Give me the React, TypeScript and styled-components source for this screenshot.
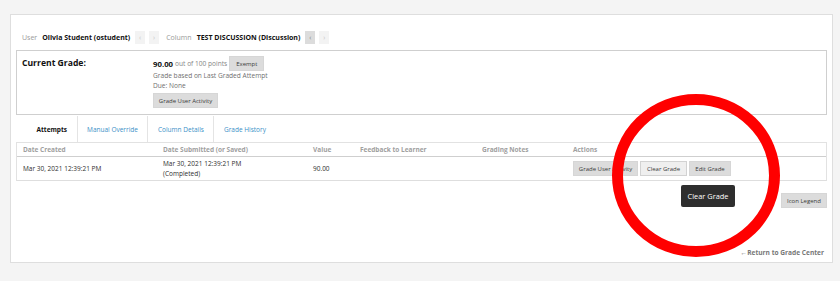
import React from "react";
import styled, { createGlobalStyle } from "styled-components";

const Global = createGlobalStyle`
  html, body { margin: 0; padding: 0; background: #f4f4f4; }
  body { font-family: "Open Sans", "Liberation Sans", sans-serif; color: #333; }
  * { box-sizing: border-box; }
`;

const Page = styled.div`
  position: relative;
  width: 840px;
  height: 281px;
  padding: 14px 7px 19px 10px;
`;

const Panel = styled.div`
  height: 249px;
  background: #fff;
  border: 1px solid #dedede;
  padding: 16px 5px 0 5px;
  display: flex;
  flex-direction: column;
`;

const Context = styled.div`
  display: flex;
  align-items: center;
  height: 12px;
  padding-left: 6px;
  font-size: 7px;
  margin-bottom: 7px;
`;

const Label = styled.span<{ $first?: boolean }>`
  color: #9a9a9a;
  margin-right: 5px;
  margin-left: ${(p) => (p.$first ? "0" : "7px")};
`;

const Strong = styled.span`
  color: #111;
  font-weight: 700;
  margin-right: 1px;
`;

const NavBtn = styled.span<{ $dark?: boolean }>`
  display: inline-flex;
  align-items: center;
  justify-content: center;
  width: 10px;
  height: 13px;
  margin-left: 4px;
  background: ${(p) => (p.$dark ? "#dcdcdc" : "#f3f3f3")};
  color: ${(p) => (p.$dark ? "#888" : "#c8c8c8")};
  font-size: 7px;
`;

const GradeBox = styled.div`
  display: flex;
  border: 1px solid #cfcfcf;
  height: 65px;
  padding: 5px 0 0 5px;
`;

const GradeTitle = styled.div`
  width: 131px;
  font-size: 8.6px;
  font-weight: 700;
  color: #111;
  line-height: 14px;
`;

const GradeInfo = styled.div`
  display: flex;
  flex-direction: column;
  align-items: flex-start;
  font-size: 6.6px;
  color: #6f6f6f;
`;

const ScoreLine = styled.div`
  display: flex;
  align-items: center;
  height: 15px;
`;

const Score = styled.span`
  font-size: 7.8px;
  font-weight: 700;
  color: #111;
  margin-right: 2px;
`;

const Muted = styled.span`
  color: #858585;
  margin-right: 2px;
`;

const Note = styled.div`
  line-height: 10px;
`;

const Button = styled.span<{ $hover?: boolean; $w?: number; $gap?: number }>`
  display: inline-flex;
  align-items: center;
  justify-content: center;
  height: 15px;
  width: ${(p) => (p.$w ? `${p.$w}px` : "auto")};
  margin-top: ${(p) => p.$gap ?? 0}px;
  background: ${(p) => (p.$hover ? "#efefef" : "#dcdcdc")};
  border: 1px solid ${(p) => (p.$hover ? "#d2d2d2" : "#d6d6d6")};
  color: #3a3a3a;
  font-size: 6px;
  white-space: nowrap;
`;

const Tabs = styled.div`
  display: flex;
  height: 26px;
  margin-top: 1px;
  padding-left: 11px;
`;

const Tab = styled.div<{ $active?: boolean }>`
  display: flex;
  align-items: center;
  padding: 0 9.5px;
  font-size: 6.5px;
  font-weight: ${(p) => (p.$active ? 700 : 400)};
  color: ${(p) => (p.$active ? "#111" : "#3b8fc7")};
  & + & { border-left: 1px solid #e4e4e4; }
`;

const Table = styled.div`
  display: grid;
  grid-template-columns: 140px 150px 47px 122px 91px 1fr;
  border: 1px solid #e2e2e2;
  border-bottom: 1px solid #dedede;
`;

const Th = styled.div`
  height: 14px;
  display: flex;
  align-items: center;
  padding-left: 6px;
  font-size: 6.5px;
  font-weight: 700;
  color: #a0a0a0;
  border-bottom: 1px solid #cfcfcf;
`;

const Td = styled.div`
  height: 23px;
  display: flex;
  flex-direction: column;
  justify-content: center;
  padding-left: 6px;
  font-size: 6.5px;
  color: #2e2e2e;
  line-height: 10px;
`;

const Actions = styled.div`
  display: flex;
  gap: 2px;
  align-items: center;
  height: 23px;
  padding-left: 6px;
`;

const LegendRow = styled.div`
  display: flex;
  justify-content: flex-end;
  margin-top: 12px;
`;

const ReturnRow = styled.div`
  display: flex;
  justify-content: flex-end;
  margin-top: auto;
  padding: 0 3px 5px 0;
  font-size: 6.6px;
  font-weight: 700;
  color: #777;
`;

const Tooltip = styled.div`
  position: absolute;
  left: 681px;
  top: 185px;
  width: 54px;
  height: 22px;
  background: #2e2e2e;
  border-radius: 2px;
  color: #fff;
  font-size: 7.4px;
  display: flex;
  align-items: center;
  justify-content: center;
`;

const Ring = styled.svg`
  position: absolute;
  left: 0;
  top: 0;
  pointer-events: none;
`;

export default function App() {
  return (
    <>
      <Global />
      <Page>
        <Panel>
          <Context>
            <Label $first>User</Label>
            <Strong>Olivia Student (ostudent)</Strong>
            <NavBtn>‹</NavBtn>
            <NavBtn>›</NavBtn>
            <Label>Column</Label>
            <Strong>TEST DISCUSSION (Discussion)</Strong>
            <NavBtn $dark>‹</NavBtn>
            <NavBtn>›</NavBtn>
          </Context>
          <GradeBox>
            <GradeTitle>Current Grade:</GradeTitle>
            <GradeInfo>
              <ScoreLine>
                <Score>90.00</Score>
                <Muted>out of 100 points</Muted>
                <Button $w={35}>Exempt</Button>
              </ScoreLine>
              <Note>Grade based on Last Graded Attempt</Note>
              <Note>Due: None</Note>
              <Button $w={65} $gap={2}>Grade User Activity</Button>
            </GradeInfo>
          </GradeBox>
          <Tabs>
            <Tab $active>Attempts</Tab>
            <Tab>Manual Override</Tab>
            <Tab>Column Details</Tab>
            <Tab>Grade History</Tab>
          </Tabs>
          <Table>
            <Th>Date Created</Th>
            <Th>Date Submitted (or Saved)</Th>
            <Th>Value</Th>
            <Th>Feedback to Learner</Th>
            <Th>Grading Notes</Th>
            <Th>Actions</Th>
            <Td>Mar 30, 2021 12:39:21 PM</Td>
            <Td>
              <span>Mar 30, 2021 12:39:21 PM</span>
              <span>(Completed)</span>
            </Td>
            <Td>90.00</Td>
            <Td />
            <Td />
            <Actions>
              <Button $w={65}>Grade User Activity</Button>
              <Button $w={47} $hover>Clear Grade</Button>
              <Button $w={42}>Edit Grade</Button>
            </Actions>
          </Table>
          <LegendRow>
            <Button $w={46}>Icon Legend</Button>
          </LegendRow>
          <ReturnRow>←Return to Grade Center</ReturnRow>
        </Panel>
        <Tooltip>Clear Grade</Tooltip>
        <Ring width="840" height="281" viewBox="0 0 840 281">
          <ellipse cx="696" cy="175.5" rx="78.5" ry="76" fill="none" stroke="#ff0000" strokeWidth="11" />
        </Ring>
      </Page>
    </>
  );
}
